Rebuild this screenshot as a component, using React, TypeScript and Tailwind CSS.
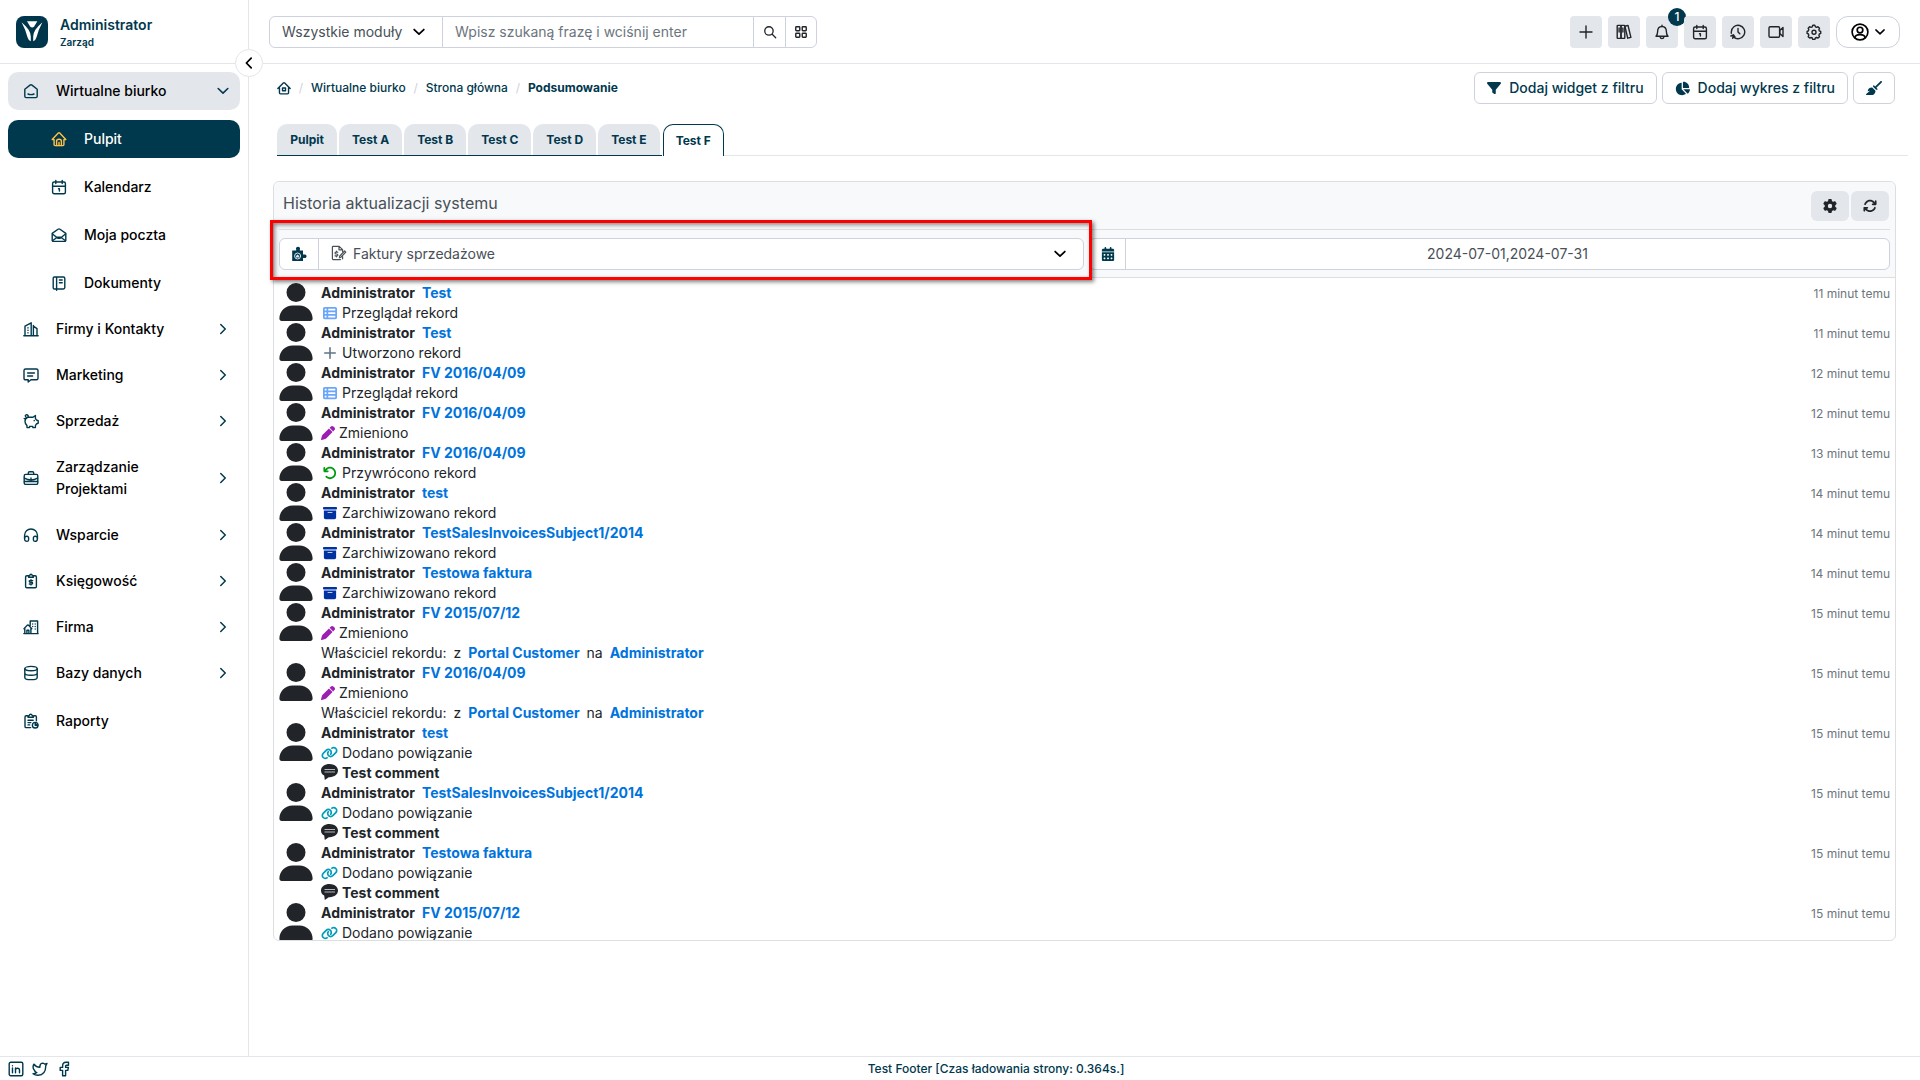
import type { ReactNode } from "react";
import clsx from "clsx";
import {
  FaArrowRotateLeft,
  FaArrowsRotate,
  FaBoxArchive,
  FaBroom,
  FaCalendarDays,
  FaChartPie,
  FaFilter,
  FaGear,
  FaLink,
  FaPen,
  FaTableList,
  FaUser,
} from "react-icons/fa6";

interface GlyphProps {
  children: ReactNode;
  className?: string;
  width?: number;
}

function Glyph({ children, className = "size-4", width = 1.4 }: GlyphProps) {
  return (
    <svg
      viewBox="0 0 16 16"
      fill="none"
      stroke="currentColor"
      strokeWidth={width}
      strokeLinecap="round"
      strokeLinejoin="round"
      className={clsx("shrink-0", className)}
      aria-hidden="true"
    >
      {children}
    </svg>
  );
}

const glyphs = {
  desk: (
    <>
      <path d="M1.8 6.2 7 2.1q1-.8 2 0l5.2 4.1v7q0 1.4-1.4 1.4H3.2q-1.4 0-1.4-1.4z" />
      <path d="M5 11q3 1.2 6 0" />
    </>
  ),
  house: (
    <>
      <path d="M1.2 8.6 7.3 2q.7-.7 1.4 0l6.1 6.6h-1.9v5q0 1-1 1H4.1q-1 0-1-1v-5z" />
      <path d="M5.6 14.6V10q0-1.8 2.4-1.8T10.4 10v4.6M8 11.5v3" />
    </>
  ),
  calendar: (
    <>
      <rect x="1.6" y="3" width="12.8" height="11.8" rx="1.5" />
      <path d="M1.6 7.2h12.8M4.8 1.4v3.2M11.2 1.4v3.2M7.5 9.8h.9v2.2" />
    </>
  ),
  mail: (
    <>
      <path d="M1.2 6.4 7 2.2q1-.7 2 0l5.8 4.2v6.8q0 1.2-1.2 1.2H2.4q-1.2 0-1.2-1.2z" />
      <path d="M1.5 7 6.2 10.8q1.8 1 3.6 0L14.5 7M1.5 13.7l4.7-3.5h3.6l4.7 3.5" />
    </>
  ),
  book: (
    <path d="M3.4 2h9q1.4 0 1.4 1.4v9.2q0 1.4-1.4 1.4h-9q-1.2 0-1.2-1.2V3.2q0-1.2 1.2-1.2zM5.6 2v13.2M8.4 5h2.8M8.4 7.8h2.8" />
  ),
  building: (
    <>
      <path d="M.8 14.8h14.4M2 14.6V5.2l6.2-3.4v12.8M10.4 5.2l3.6 2.4v7M10.4 4.5v10.1" />
      <path d="M5 6.8v.2M5 9.2v.2M5 11.7v.2" />
    </>
  ),
  chat: (
    <>
      <path d="M2.6 2h10.8q1.6 0 1.6 1.6v7.6q0 1.6-1.6 1.6H8L5.2 15v-2.2H2.6Q1 12.8 1 11.2V3.6Q1 2 2.6 2z" />
      <path d="M4.6 6h6.8M4.6 9h5" />
    </>
  ),
  piggy: (
    <>
      <path d="M5 4.2h5L12.4 2.5v2.8l1 1.7 1.8.7v2.5l-1.8.8-1 1.6v2H9.8v-1.2H6.500v1.2H4v-2Q2 11 2 8.2 2 5.500 5 4.2z" />
      <path d="M1.2 5.500Q2 6.200 3.500 5L2.300 3Q2.600 1.500 4 1.800q1.500.4 1.300 2.200M11.200 7.500v.2" />
    </>
  ),
  briefcase: (
    <>
      <rect x="1.2" y="4.4" width="13.6" height="10" rx="1.5" />
      <path d="M5.3 4.2V3q0-1.2 1.2-1.2h3q1.2 0 1.2 1.2v1.2M1.4 8.2Q8 11.8 14.6 8.2M1.4 11.5h13.2M8 8v.7" />
    </>
  ),
  headset: (
    <>
      <path d="M1.6 11.2V8.2C1.6 4.500 4.500 2 8 2s6.400 2.500 6.400 6.200v3" />
      <path d="M1.6 10q3-1.700 4 .5V13q-.2 1.400-1.500 1.400-2.500 0-2.500-2.400zM14.400 10q-3-1.700-4 .5V13q.2 1.400 1.500 1.400 2.500 0 2.500-2.400z" />
    </>
  ),
  bill: (
    <>
      <path d="M5.500 2.800H3.800q-1.200 0-1.200 1.200v9.600q0 1.200 1.200 1.200h8.400q1.200 0 1.200-1.200V4q0-1.200-1.200-1.200h-1.700" />
      <path d="M5.600 4.300V3l1-.3Q7 1.200 8 1.200t1.400 1.500l1 .3v1.300zM9.700 7.600H7.200q-1 0-.9.900.1.700.9.700h1.500q.9 0 .9.900t-.9.900H6.300M8 6.700v.8M8 11.100v.8" />
    </>
  ),
  offices: (
    <>
      <path d="M7.200 6.500V2h7.400v12.600M.8 14.600h14.400M1.800 14.400V9.600M7.900 14.400V9.600M1 9.800l3.100-3.400q.8-.7 1.600 0l3.100 3.400M3.900 14.400v-3.200h2v3.200" />
      <path d="M9.700 5v.1M12.200 5v.1M9.700 7.500v.1M12.200 7.500v.1M12.200 10v.1" />
    </>
  ),
  database: (
    <>
      <ellipse cx="8" cy="3.6" rx="6.2" ry="2.2" />
      <path d="M1.8 3.6v8.8q0 2.2 6.2 2.2t6.2-2.2V3.6M1.8 8q0 2.2 6.2 2.2T14.2 8" />
    </>
  ),
  report: (
    <>
      <path d="M5 2.800H3.200Q2 2.800 2 4v9.400q0 1.200 1.200 1.200h4.500M10.800 2.800h1.400q1.200 0 1.200 1.200v3.800M5 4.300V3l1-.3Q6.600 1.200 7.700 1.200t1.700 1.500l1 .3v1.300zM5 7.300h5.200M5 9.600h2.800M5 11.900h1.700" />
      <circle cx="12.2" cy="12.2" r="2.8" />
      <path d="M12.2 9.600v2.600h2.600" fill="currentColor" />
    </>
  ),
  homeDot: (
    <>
      <path d="M1 8.500 7.200 2.200q.8-.7 1.600 0L15 8.500M2.800 7.500v6q0 1.200 1.200 1.200h8q1.200 0 1.200-1.200v-6" />
      <rect x="6.3" y="8" width="3.4" height="3.2" />
    </>
  ),
  down: <path d="m2.500 5.200 5.500 5.300 5.500-5.300" />,
  right: <path d="m5 2 6 6-6 6" />,
  left: <path d="M10.500 2.500 5 8l5.500 5.500" />,
  plus: <path d="M8 2v12M2 8h12" />,
  books: (
    <>
      <rect x="1.2" y="1.4" width="3.8" height="13" rx=".6" />
      <rect x="5" y="1.4" width="3.8" height="13" rx=".6" />
      <path d="m8.900 2.200 3.100-.8 2.900 11.900-3.200.9zM3.100 4v4M6.900 4v4" />
    </>
  ),
  bell: (
    <path d="M2 12.200q1.600-1.500 1.600-4.400 0-5.300 4.400-5.300t4.400 5.300q0 2.900 1.600 4.400zM8 2.300V1.200M6 12.600q.4 2 2 2t2-2" />
  ),
  history: (
    <path d="M1.300 8a6.700 6.700 0 1 1 2.200 5M1.300 8v1.200M.9 12l2.400-1.200L5 12.900M3.300 10.900l-.6 3.400M8 4.500V8l1.800 1.800" />
  ),
  video: (
    <>
      <rect x="1" y="2.8" width="10.6" height="10.4" rx="1.2" />
      <path d="m11.800 6.500 3.200-3v9l-3.200-3z" />
    </>
  ),
  cog: (
    <>
      <path d="m6.800 1.300-.5 1.500-1.200.5-1.500-.6-1.400 1.500.6 1.400-.5 1.300-1.200.6v1.900l1.300.6.4 1.200-.6 1.500 1.500 1.400 1.400-.6 1.200.5.5 1.400h2l.6-1.400 1.200-.5 1.400.6 1.500-1.400-.6-1.500.5-1.200 1.300-.6V7.500l-1.300-.6-.5-1.200.6-1.500L12 2.700l-1.400.6-1.200-.5-.6-1.500z" />
      <circle cx="8" cy="8.300" r="2" />
    </>
  ),
  user: (
    <>
      <circle cx="8" cy="8" r="7" />
      <circle cx="8" cy="6.3" r="2.5" />
      <path d="M3.500 13q.4-2.600 4.500-2.600t4.500 2.600" />
    </>
  ),
  search: (
    <>
      <circle cx="6.8" cy="6.8" r="4.8" />
      <path d="m10.500 10.500 4 4" />
    </>
  ),
  grid: (
    <>
      <rect x="2" y="2" width="4.6" height="4.6" rx=".8" />
      <rect x="9.4" y="2" width="4.6" height="4.6" rx=".8" />
      <rect x="2" y="9.4" width="4.6" height="4.6" rx=".8" />
      <rect x="9.4" y="9.4" width="4.6" height="4.6" rx=".8" />
    </>
  ),
  invoice: (
    <>
      <path d="M9.500 14.600H2.200q-.8 0-.8-.8V2.200q0-.8.8-.8h6l3.400 3.200v2M8 1.600v3.200h3.400M11.600 11.500v2.300" />
      <path d="m8.800 11 4.800-5 1.200 1.100L10 12.200l-1.600.5zM6.800 7.200H4.900q-.9 0-.9.900t.9.900h1q.9 0 .9.900t-.9.900H4M5.400 6.200v1M5.400 10.900v.9" />
    </>
  ),
  linkedin: (
    <>
      <rect x="1.2" y="1.2" width="13.6" height="13.6" rx="1.5" />
      <path d="M4.500 7v4.800M4.500 4.700v.1M7.500 11.800V7M7.500 9q0-1.800 2-1.800t2 1.800v2.800" />
    </>
  ),
  twitter: (
    <path d="M1 12.800q2.300.2 3.800-1.200Q2.600 11 2.400 9.200 0 6.300 1.900 3.200q2.300 3 6 3.100-.3-3.900 2.600-4.200 1.300 0 2.200 1l2.300-.6-1.300 2.300q.3 9-7.700 9.400-3 0-5-1.400z" />
  ),
  facebook: (
    <path d="M12.500 1.200H10Q6.600 1.400 6.600 5v1.400H4.200v3h2.400v5.400h3V9.400h2.200l.6-3H9.600V5.200q0-1 1-1h1.900z" />
  ),
};

type GlyphName = keyof typeof glyphs;

const subItems: { label: string; icon: GlyphName; active?: boolean }[] = [
  { label: "Pulpit", icon: "house", active: true },
  { label: "Kalendarz", icon: "calendar" },
  { label: "Moja poczta", icon: "mail" },
  { label: "Dokumenty", icon: "book" },
];

const menuItems: { label: string; icon: GlyphName }[] = [
  { label: "Firmy i Kontakty", icon: "building" },
  { label: "Marketing", icon: "chat" },
  { label: "Sprzedaż", icon: "piggy" },
  { label: "Zarządzanie Projektami", icon: "briefcase" },
  { label: "Wsparcie", icon: "headset" },
  { label: "Księgowość", icon: "bill" },
  { label: "Firma", icon: "offices" },
  { label: "Bazy danych", icon: "database" },
];

const tabs = ["Pulpit", "Test A", "Test B", "Test C", "Test D", "Test E", "Test F"];

const tools: { label: string; icon: GlyphName; badge?: number }[] = [
  { label: "Szybkie tworzenie", icon: "plus" },
  { label: "Baza wiedzy", icon: "books" },
  { label: "Powiadomienia", icon: "bell", badge: 1 },
  { label: "Kalendarz", icon: "calendar" },
  { label: "Historia", icon: "history" },
  { label: "Wideo", icon: "video" },
  { label: "Ustawienia", icon: "cog" },
];

type Action = "view" | "create" | "edit" | "restore" | "archive" | "link";

interface Entry {
  record: string;
  action: Action;
  time: number;
  owner?: boolean;
  comment?: boolean;
}

const entries: Entry[] = [
  { record: "Test", action: "view", time: 11 },
  { record: "Test", action: "create", time: 11 },
  { record: "FV 2016/04/09", action: "view", time: 12 },
  { record: "FV 2016/04/09", action: "edit", time: 12 },
  { record: "FV 2016/04/09", action: "restore", time: 13 },
  { record: "test", action: "archive", time: 14 },
  { record: "TestSalesInvoicesSubject1/2014", action: "archive", time: 14 },
  { record: "Testowa faktura", action: "archive", time: 14 },
  { record: "FV 2015/07/12", action: "edit", time: 15, owner: true },
  { record: "FV 2016/04/09", action: "edit", time: 15, owner: true },
  { record: "test", action: "link", time: 15, comment: true },
  { record: "TestSalesInvoicesSubject1/2014", action: "link", time: 15, comment: true },
  { record: "Testowa faktura", action: "link", time: 15, comment: true },
  { record: "FV 2015/07/12", action: "link", time: 15 },
];

const actions: Record<Action, { label: string; icon: ReactNode }> = {
  view: { label: "Przeglądał rekord", icon: <FaTableList className="size-[14px] text-[#6ba6fb]" /> },
  create: {
    label: "Utworzono rekord",
    icon: (
      <Glyph className="size-[14px] text-[#5f7587]" width={1.8}>
        {glyphs.plus}
      </Glyph>
    ),
  },
  edit: { label: "Zmieniono", icon: <FaPen className="size-[14px] text-[#9c1fb1]" /> },
  restore: { label: "Przywrócono rekord", icon: <FaArrowRotateLeft className="size-[14px] text-[#009c0c]" /> },
  archive: { label: "Zarchiwizowano rekord", icon: <FaBoxArchive className="size-[14px] text-[#0032a2]" /> },
  link: { label: "Dodano powiązanie", icon: <FaLink className="h-[14px] w-[17px] text-[#009cb9]" /> },
};

function Logo() {
  return (
    <svg viewBox="0 0 32 32" className="size-8" aria-hidden="true">
      <rect width="32" height="32" rx="8" fill="#00364b" />
      <g fill="#fff">
        <path d="M11 5.3h10.300l-3.300 5.400q-1.800 1.600-3.700 0z" />
        <path d="M5.600 6.300q4.500 4 7 7.500 2.200 3.500 2.200 6.700v4.800q-2.400-.6-3.400-4.200-1.600-7-5.800-14.800z" />
        <path d="M26.400 6.300q-4.500 4-7 7.500-2.200 3.500-2.200 6.700v4.800q2.400-.6 3.400-4.200 1.600-7 5.800-14.800z" />
      </g>
    </svg>
  );
}

function Sidebar() {
  return (
    <aside className="flex w-[249px] shrink-0 flex-col border-r border-[#e3e6eb]">
      <div className="flex h-16 gap-3 border-b border-[#e3e6eb] pl-4 pt-4">
        <Logo />
        <div className="text-[#00384d]">
          <div className="text-sm font-semibold leading-[18px]">Administrator</div>
          <div className="text-[10px] font-semibold leading-4">Zarząd</div>
        </div>
      </div>

      <nav className="flex flex-col px-2 py-2 text-sm font-medium leading-[22px] text-black">
        <button className="flex h-[38px] items-center rounded-[10px] bg-[#e3e6eb] px-[15px] text-left">
          <Glyph className="size-4 text-[#00384d]">{glyphs.desk}</Glyph>
          <span className="ml-[17px] flex-1">Wirtualne biurko</span>
          <Glyph className="mr-[-5px] size-[14px] text-[#00384d]" width={1.8}>
            {glyphs.down}
          </Glyph>
        </button>

        {/* Podmenu */}
        <div className="mb-2 mt-[10px] flex flex-col gap-[10px]">
          {subItems.map((item) => (
            <a
              key={item.label}
              href="#"
              className={clsx(
                "flex h-[38px] items-center gap-[17px] rounded-[10px] pl-[43px]",
                item.active && "bg-[#00384d] text-white"
              )}
            >
              <Glyph className={clsx("size-4", item.active ? "text-[#ffc247]" : "text-[#00384d]")}>
                {glyphs[item.icon]}
              </Glyph>
              {item.label}
            </a>
          ))}
        </div>

        <div className="flex flex-col gap-2">
          {menuItems.map((item) => (
            <button key={item.label} className="flex items-center px-[15px] py-2 text-left">
              <Glyph className="size-4 text-[#00384d]">{glyphs[item.icon]}</Glyph>
              <span className="ml-[17px] w-[120px]">{item.label}</span>
              <Glyph className="ml-auto mr-[-4px] size-3 text-[#00384d]" width={2}>
                {glyphs.right}
              </Glyph>
            </button>
          ))}
        </div>
        <a href="#" className="mt-[10px] flex items-center gap-[17px] px-[15px] py-2">
          <Glyph className="size-4 text-[#00384d]">{glyphs.report}</Glyph>
          Raporty
        </a>
      </nav>
    </aside>
  );
}

function Header() {
  return (
    <header className="flex h-16 items-center justify-between border-b border-[#e3e6eb] pl-5 pr-5">
      <div className="flex h-8 w-[548px] rounded-md border border-[#ced2de] text-sm text-[#495057]">
        <div className="relative w-[173px] border-r border-[#ced2de]">
          <select aria-label="Moduł" className="size-full appearance-none pl-3 outline-none">
            <option>Wszystkie moduły</option>
          </select>
          <Glyph className="pointer-events-none absolute right-4 top-2 size-[14px] text-black" width={2}>
            {glyphs.down}
          </Glyph>
        </div>
        <input
          type="text"
          aria-label="Szukaj"
          placeholder="Wpisz szukaną frazę i wciśnij enter"
          className="min-w-0 flex-1 px-3 outline-none placeholder:text-[#6c757d]"
        />
        <button aria-label="Szukaj" className="flex w-8 items-center justify-center border-l border-[#ced2de]">
          <Glyph className="size-[14px] text-[#212529]" width={1.5}>
            {glyphs.search}
          </Glyph>
        </button>
        <button
          aria-label="Wyszukiwanie zaawansowane"
          className="flex w-[31px] items-center justify-center border-l border-[#ced2de]"
        >
          <Glyph className="size-[14px] text-[#212529]" width={1.6}>
            {glyphs.grid}
          </Glyph>
        </button>
      </div>

      <div className="flex gap-[6px]">
        {tools.map((tool) => (
          <button
            key={tool.label}
            aria-label={tool.label}
            className="relative flex size-8 items-center justify-center rounded bg-[#e3e6eb] text-[#212529]"
          >
            <Glyph className="size-4">{glyphs[tool.icon]}</Glyph>
            {tool.badge && (
              <span className="absolute -right-2 -top-2 flex size-[18px] items-center justify-center rounded-full bg-[#00384d] text-xs font-medium text-white">
                {tool.badge}
              </span>
            )}
          </button>
        ))}
        <button
          aria-label="Profil"
          className="flex h-8 w-16 items-center justify-center gap-[5px] rounded-xl border border-[#ced2de] text-black"
        >
          <Glyph className="size-[18px]" width={1.5}>
            {glyphs.user}
          </Glyph>
          <Glyph className="size-3" width={2}>
            {glyphs.down}
          </Glyph>
        </button>
      </div>
    </header>
  );
}

function Toolbar() {
  const button =
    "flex h-8 items-center gap-2 rounded-md border border-[#ced2de] px-3 text-sm font-medium text-[#00384d]";

  return (
    <div className="flex items-center justify-between pl-[28px] pr-[25px] pt-2">
      <nav className="flex items-center text-xs font-medium text-[#00384d]">
        <a href="#" aria-label="Strona startowa">
          <Glyph className="size-[14px]" width={1.6}>
            {glyphs.homeDot}
          </Glyph>
        </a>
        <span className="w-5 text-center font-normal text-[#ced2de]">/</span>
        <a href="#">Wirtualne biurko</a>
        <span className="w-5 text-center font-normal text-[#ced2de]">/</span>
        <a href="#">Strona główna</a>
        <span className="w-5 text-center font-normal text-[#ced2de]">/</span>
        <span className="font-bold">Podsumowanie</span>
      </nav>
      <div className="flex gap-[5px]">
        <button className={button}>
          <FaFilter className="size-[14px]" />
          Dodaj widget z filtru
        </button>
        <button className={button}>
          <FaChartPie className="size-[15px]" />
          Dodaj wykres z filtru
        </button>
        <button aria-label="Wyczyść" className={button}>
          <FaBroom className="size-4" />
        </button>
      </div>
    </div>
  );
}

function Tabs() {
  return (
    <div className="mr-3 flex pl-[28px] pt-5 text-xs font-bold text-[#00384d]">
      {tabs.map((tab) =>
        tab === "Test F" ? (
          <button key={tab} className="ml-px h-8 rounded-t-[10px] border border-b-0 border-[#00384d] px-3">
            {tab}
          </button>
        ) : (
          <div key={tab} className="border-b border-[#00384d] pr-[2px]">
            <button className="h-[31px] min-w-[60px] rounded-t-[10px] bg-[#e3e6eb] px-[13px]">{tab}</button>
          </div>
        )
      )}
      <div className="flex-1 border-b border-[#e3e6eb]" />
    </div>
  );
}

function HistoryRow({ entry }: { entry: Entry }) {
  const action = actions[entry.action];

  return (
    <li className="flex">
      <FaUser className="mr-2 h-[38px] w-[34px] shrink-0 text-[#212529]" />
      <div className="flex-1 leading-5">
        <div>
          <b>Administrator</b>
          <a href="#" className="ml-[7px] font-bold text-[#0073dd]">
            {entry.record}
          </a>
        </div>
        <div className="flex items-center gap-1">
          <span className={clsx("flex justify-center", entry.action !== "edit" && "w-[17px]")}>{action.icon}</span>
          {action.label}
        </div>
        {entry.owner && (
          <div className="flex gap-[7px]">
            <span>Właściciel rekordu:</span>
            <span>z</span>
            <a href="#" className="font-bold text-[#0073dd]">
              Portal Customer
            </a>
            <span>na</span>
            <a href="#" className="font-bold text-[#0073dd]">
              Administrator
            </a>
          </div>
        )}
        {entry.comment && (
          <div className="flex items-center gap-1 font-bold">
            <svg viewBox="0 0 17 18" className="h-[18px] w-[17px]" aria-hidden="true">
              <path
                d="M8.500 0C4 0 0 2.700 0 6.400c0 2.300 1.200 4.200 3.200 5.200L3.800 16l4-2.800h1C13.400 13.200 17 10.400 17 6.600S13 0 8.500 0z"
                fill="#212529"
              />
              <path d="M3.500 5.500h10.500M3.500 8h10.500" stroke="#b5b8ba" />
            </svg>
            Test comment
          </div>
        )}
      </div>
      <time className="text-xs leading-[22px] text-[#6c757d]">{entry.time} minut temu</time>
    </li>
  );
}

function HistoryWidget() {
  const square = "flex h-[30px] w-[38px] items-center justify-center rounded-md bg-[#e3e6eb] text-[#212529]";

  return (
    <section className="ml-6 mr-6 mt-[25px] rounded-md border border-[#dcdfe2]">
      <div className="rounded-t-md border-b border-[#dcdfe2] bg-[#f8f9fb] px-[5px] pb-[7px]">
        <div className="flex h-12 items-center justify-between border-b border-[#dcdfe2] pb-2 pl-1 pr-px pt-2">
          <h5 className="pb-[6px] text-base text-[#495057]">Historia aktualizacji systemu</h5>
          <div className="flex gap-[2px]">
            <button aria-label="Ustawienia widgetu" className={square}>
              <FaGear className="size-[14px]" />
            </button>
            <button aria-label="Odśwież" className={square}>
              <FaArrowsRotate className="size-[14px]" />
            </button>
          </div>
        </div>

        {/* Filtry */}
        <div className="mt-2 flex gap-[5px] text-sm text-[#495057]">
          <div className="relative flex h-8 grow basis-[6px] rounded-md border border-[#ced2de] bg-white">
            <label htmlFor="module" className="flex w-[39px] items-center justify-center border-r border-[#ced2de]">
              <svg viewBox="0 0 16 16" className="size-4 text-[#00384d]" aria-hidden="true">
                <path
                  d="M1.2 4.500h4V3.500a2 2 0 1 1 3.600 0v1h3.200v4h1.200a1.800 1.800 0 1 1 0 3.400H12V15H1.200z"
                  fill="currentColor"
                />
                <circle cx="6.600" cy="10" r="3" fill="none" stroke="#dfe6ea" />
                <path d="m5 10 1.600-1.500L8.200 10v1.500H5z" fill="#dfe6ea" />
              </svg>
            </label>
            <div className="relative flex-1">
              <Glyph className="pointer-events-none absolute left-3 top-[6px] size-4" width={1.2}>
                {glyphs.invoice}
              </Glyph>
              <select id="module" className="size-full appearance-none pl-[34px] outline-none">
                <option>Faktury sprzedażowe</option>
              </select>
              <Glyph
                className="pointer-events-none absolute right-4 top-2 size-[14px] text-black"
                width={2}
              >
                {glyphs.down}
              </Glyph>
            </div>
            {/* Wyróżnienie pola wyboru modułu */}
            <div className="pointer-events-none absolute -bottom-[11px] -left-[10px] -right-[9px] -top-[19px] z-10 border-3 border-[#ff0000] shadow-[2px_2px_4px_rgba(0,0,0,0.5),inset_2px_2px_4px_rgba(0,0,0,0.45)]" />
          </div>
          <div className="flex h-8 grow basis-0 rounded-md border border-[#ced2de] bg-white">
            <label htmlFor="range" className="flex w-[36px] items-center justify-center border-r border-[#ced2de]">
              <FaCalendarDays className="size-[14px] text-[#00384d]" />
            </label>
            <input
              id="range"
              type="text"
              defaultValue="2024-07-01,2024-07-31"
              className="min-w-0 flex-1 text-center outline-none"
            />
          </div>
        </div>
      </div>

      <ul className="max-h-[662px] overflow-y-auto px-[5px] pt-[5px] text-sm text-[#212529] [scrollbar-width:none]">
        {entries.map((entry, i) => (
          <HistoryRow key={i} entry={entry} />
        ))}
      </ul>
    </section>
  );
}

export default function App() {
  return (
    <div className="flex min-h-screen flex-col bg-white font-['Inter','Liberation_Sans',sans-serif]">
      <div className="relative flex flex-1">
        <Sidebar />
        <button
          aria-label="Zwiń menu"
          className="absolute left-[235px] top-[49px] z-10 flex size-7 items-center justify-center rounded-full border border-[#e3e6eb] bg-white text-black"
        >
          <Glyph className="size-[14px]" width={2}>
            {glyphs.left}
          </Glyph>
        </button>
        <main className="min-w-0 flex-1">
          <Header />
          <Toolbar />
          <Tabs />
          <HistoryWidget />
        </main>
      </div>

      <footer className="flex h-6 items-center border-t border-[#e3e6eb] pl-2 text-xs font-medium text-[#00384d]">
        <div className="flex gap-2">
          <a href="#" aria-label="LinkedIn">
            <Glyph className="size-4">{glyphs.linkedin}</Glyph>
          </a>
          <a href="#" aria-label="Twitter">
            <Glyph className="size-4">{glyphs.twitter}</Glyph>
          </a>
          <a href="#" aria-label="Facebook">
            <Glyph className="size-4">{glyphs.facebook}</Glyph>
          </a>
        </div>
        <p className="flex-1 text-center">Test Footer [Czas ładowania strony: 0.364s.]</p>
      </footer>
    </div>
  );
}
